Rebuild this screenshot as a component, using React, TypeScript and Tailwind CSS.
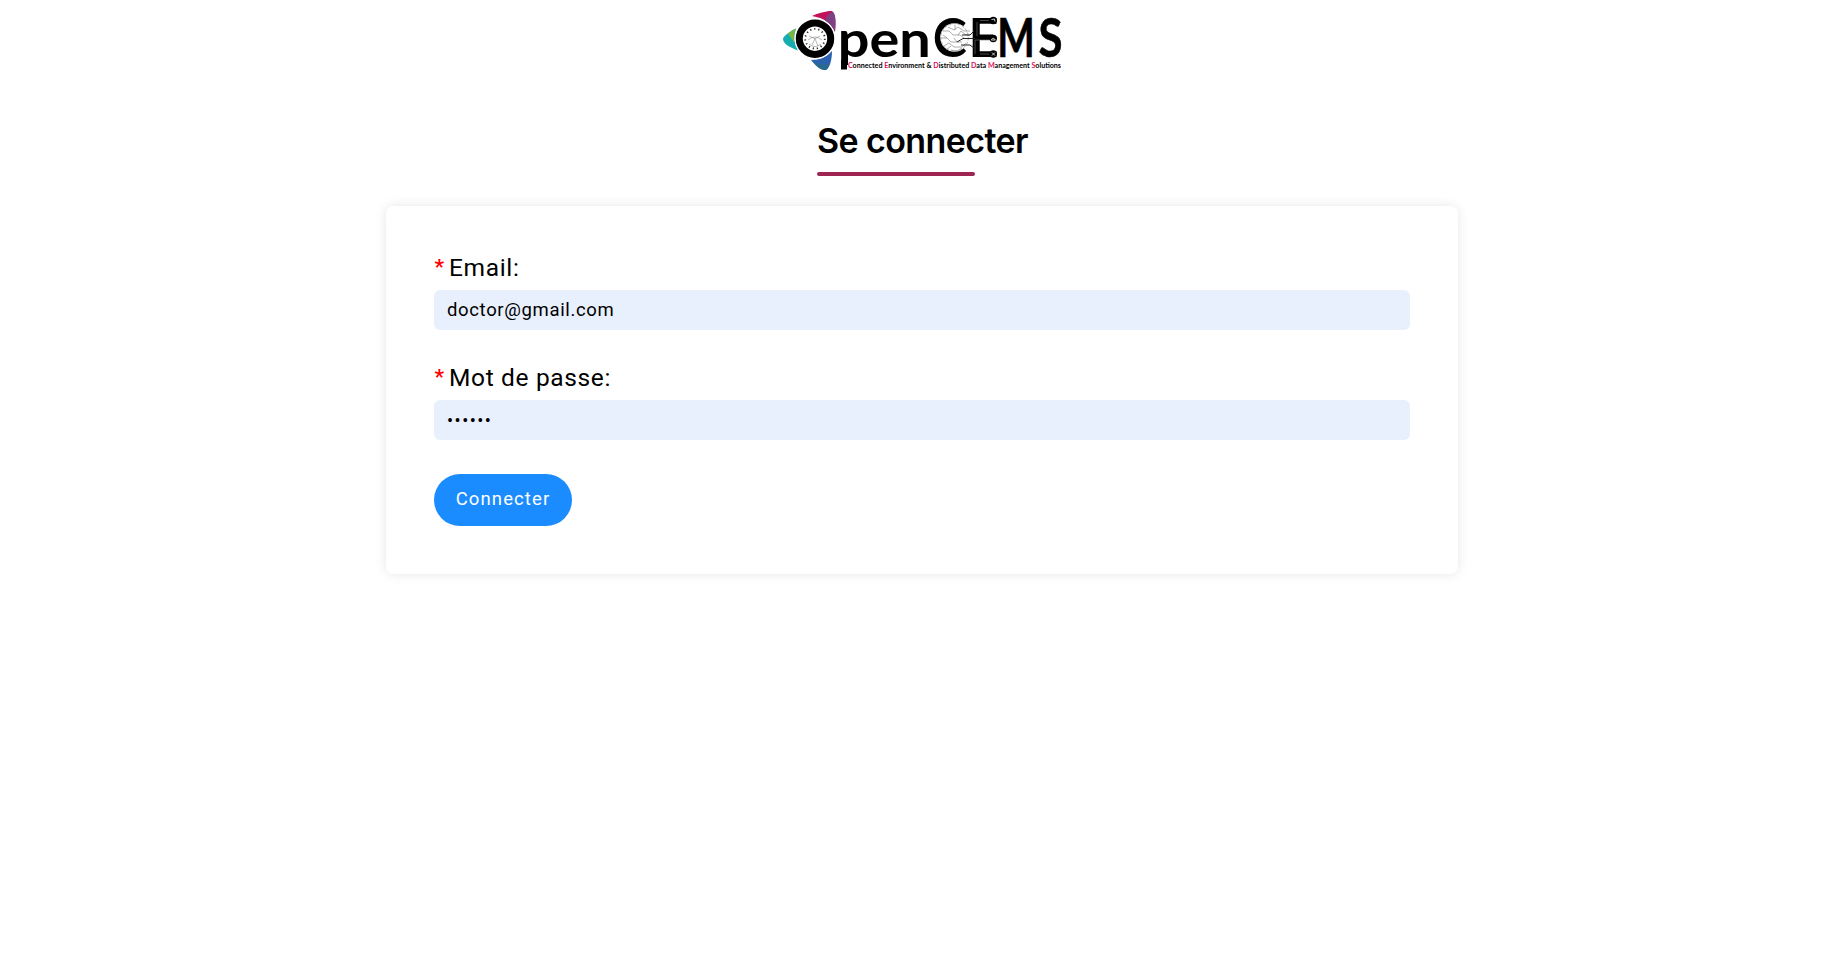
import React from "react";

function Logo() {
  return (
    <svg width="300" height="80" viewBox="770 0 300 80" role="img" aria-label="OpenCEMS" className="mr-1 shrink-0">
      <path d="M783 39C783 36 792 30 796 28.5Q792 40 798 50.5C791 48 783 44 783 39Z" fill="#17adb0" />
      <path d="M788 33.5Q791 31 796 28.5Q793 34 794.5 43Z" fill="#7cb642" />
      <path d="M812 16C818 13 828 10.5 832 11C835 13 836 20 835 32C831 23 824 18 812 16Z" fill="#c4125a" />
      <path d="M825 20.5C827 15 830 12 833 12C836 15 836 22 835 32Q832 25 825 20.5Z" fill="#7d4184" />
      <path d="M811 60Q824 60 832 51C832 59 830 68 826 70C821 71 815 65 811 60Z" fill="#2b62b0" />
      <path d="M813 62Q820 65 829 64C828 68 827 70 824 70C820 69 816 66 813 62Z" fill="#2a6a8e" />
      <circle cx="815" cy="38.7" r="20.5" fill="#fff" />
      <circle cx="815" cy="38.7" r="15.7" fill="none" stroke="#000" strokeWidth="7" />
      <circle cx="815" cy="38.7" r="9.8" fill="none" stroke="#222" strokeWidth="1.8" strokeDasharray="1.2 2.9" />
      <path d="M809 36L815 38.7L820 36M812 45L815 38.7L818 46M808 40Q815 34 822 40M809 44Q815 49 821 44" fill="none" stroke="#888" strokeWidth=".6" />
      <g fontFamily="Lato, sans-serif" fontWeight="700" fill="#000">
        <text x="837.7" y="57" fontSize="50" textLength="93" lengthAdjust="spacingAndGlyphs">pen</text>
        <text x="932.7" y="57" fontSize="54" textLength="34" lengthAdjust="spacingAndGlyphs">C</text>
        <text x="968.5" y="57" fontSize="53" textLength="30" lengthAdjust="spacingAndGlyphs">E</text>
        <text x="997.3" y="57" fontSize="53" textLength="37.5" lengthAdjust="spacingAndGlyphs" stroke="#000" strokeWidth=".6">M</text>
        <text x="1038.5" y="57" fontSize="53" textLength="24" lengthAdjust="spacingAndGlyphs" stroke="#000" strokeWidth=".6">S</text>
      </g>
      <rect x="841" y="60" width="6" height="9.5" />
      <circle cx="954.5" cy="37.5" r="14.3" fill="#fff" />
      <g fill="none" stroke="#777" strokeWidth=".6">
        <path d="M943 31H949L953 35H960L964 38M941 38H947L951 42H962M944 46L949 43L954 47H962L966 43M948 27L954 30L958 27L964 31H970M951 50L957 51L962 48M943 35L947 38M955 25V30M958 35L961 31L966 35H970M946 50L951 46M957 42L954 38" />
        <circle cx="954.5" cy="37.5" r="13.8" strokeDasharray="3 1.5" />
      </g>
      <path d="M957 42L963 38.5H975M962 35H970L974 31M961 45H970L974 48" fill="none" stroke="#222" strokeWidth="1" />
      <path d="M975 54V40H990M977 22V36M980 20.5H989M980 54H989" fill="none" stroke="#777" strokeWidth=".6" />
      <circle cx="993.3" cy="20.5" r="3.7" />
      <circle cx="993.3" cy="38.5" r="3.7" />
      <circle cx="993.3" cy="54" r="3.7" />
      <path d="M991.5 19.5L994.5 19L995 21.5M991.3 40Q993.3 36.5 995.3 40ZM992 52.5L995 55.5M995 52.5L992 55.5" fill="none" stroke="#fff" strokeWidth=".8" />
      <text x="848" y="67.7" fontFamily="Lato, sans-serif" fontWeight="700" fontSize="6.6" textLength="213" lengthAdjust="spacingAndGlyphs">
        <tspan fill="#e0105c">C</tspan>onnected <tspan fill="#e0105c">E</tspan>nvironment &amp; <tspan fill="#e0105c">D</tspan>istributed <tspan fill="#e0105c">D</tspan>ata <tspan fill="#e0105c">M</tspan>anagement <tspan fill="#e0105c">S</tspan>olutions
      </text>
    </svg>
  );
}

type FieldProps = { label: string; type: string; value: string; spacing: string };

function Field({ label, type, value, spacing }: FieldProps) {
  return (
    <div className="mb-[34px]">
      <label className="mb-1 flex h-8 items-center pb-1 text-[24.5px] leading-7 tracking-[0.65px]">
        <span className="mb-0.5 mr-1 w-[11px] text-center text-[21px] font-bold text-[#f00]">*</span>
        {label}
      </label>
      <input
        type={type}
        defaultValue={value}
        className={`block h-10 w-full rounded-md bg-[#e8effd] px-[13px] outline-none ${spacing}`}
      />
    </div>
  );
}

export default function App() {
  return (
    <main className="flex min-h-screen flex-col items-center bg-white pl-1 font-['Roboto',sans-serif] text-black">
      <Logo />
      <h1 className="mt-9 w-[210px] whitespace-nowrap font-['Inter',sans-serif] text-[34px] font-semibold leading-[50px] tracking-[-0.6px]">Se connecter</h1>
      <div className="mr-[52px] mt-1.5 h-1 w-[158px] rounded-full bg-[#9e2452]" />
      <form className="mt-[30px] h-[368px] w-[1072px] rounded-lg bg-white px-12 pt-12 shadow-[0_0_12px_rgba(0,0,0,0.1)]">
        <Field label="Email:" type="email" value="doctor@gmail.com" spacing="text-[18.5px] tracking-[0.65px]" />
        <Field label="Mot de passe:" type="password" value="123456" spacing="text-[18px] tracking-[1.5px]" />
        <button type="button" className="h-[52px] w-[138px] rounded-full bg-[#1a8cff] text-[18.5px] tracking-[1.1px] text-white">Connecter</button>
      </form>
    </main>
  );
}
